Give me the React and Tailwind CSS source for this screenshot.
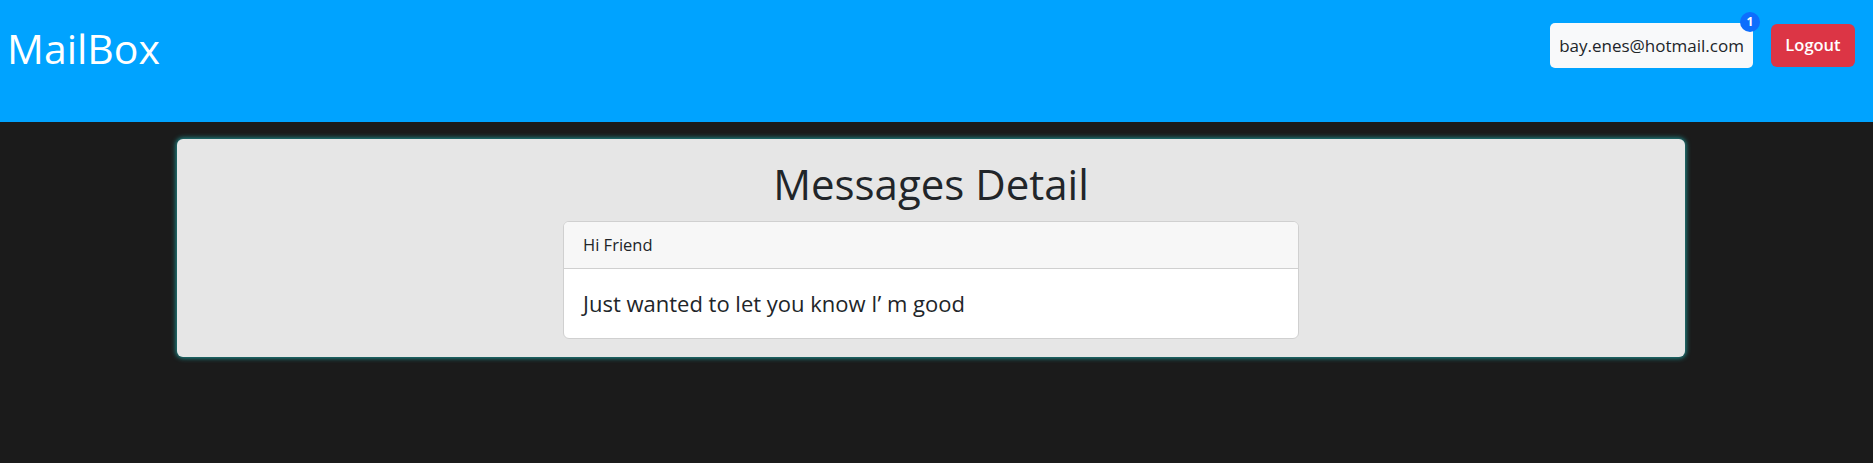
import React from "react";

const font = { fontFamily: "'Open Sans', Lato, sans-serif" };

const Navbar = () => {
  return (
    <nav className="flex h-[122px] items-start justify-between bg-[#00a3ff]">
      <span className="ml-[7px] mt-[22px] text-[41px] leading-[53px] text-white">
        MailBox
      </span>
      <div className="mr-[18px] mt-[23px] flex items-center gap-[18px]">
        <div className="relative flex h-[45px] w-[203px] items-center justify-center rounded-[5px] bg-[#f8f9fa] text-[17px] text-[#212529]">
          bay.enes@hotmail.com
          <span className="absolute -right-[7px] -top-[11px] flex h-[20px] w-[20px] items-center justify-center rounded-full bg-[#0d6efd] text-[12px] font-bold text-white">
            1
          </span>
        </div>
        <button className="h-[43px] w-[84px] rounded-[6px] bg-[#dc3545] text-[16.5px] font-semibold text-white">
          Logout
        </button>
      </div>
    </nav>
  );
};

const App = () => {
  return (
    <div className="min-h-screen bg-[#1b1b1b]" style={font}>
      <Navbar />

      {/* message detail */}
      <div className="ml-[177px] mt-[17px] h-[218px] w-[1508px] rounded-[6px] bg-[#e6e6e6] pt-[21px] shadow-[0_0_5px_1px_#1f9494]">
        <h1 className="mb-[13px] text-center text-[42px] leading-[48px] text-[#212529]">
          Messages Detail
        </h1>
        <div className="mx-auto w-[736px] overflow-hidden rounded-[6px] border border-[#d0d0d0] bg-white text-[#212529]">
          <div className="flex h-[47px] items-center border-b border-[#d0d0d0] bg-[#f7f7f7] px-[19px] text-[16.5px]">
            Hi Friend
          </div>
          <div className="flex h-[69px] items-center px-[19px] text-[22px]">
            Just wanted to let you know I’ m good
          </div>
        </div>
      </div>
    </div>
  );
};

export default App;
